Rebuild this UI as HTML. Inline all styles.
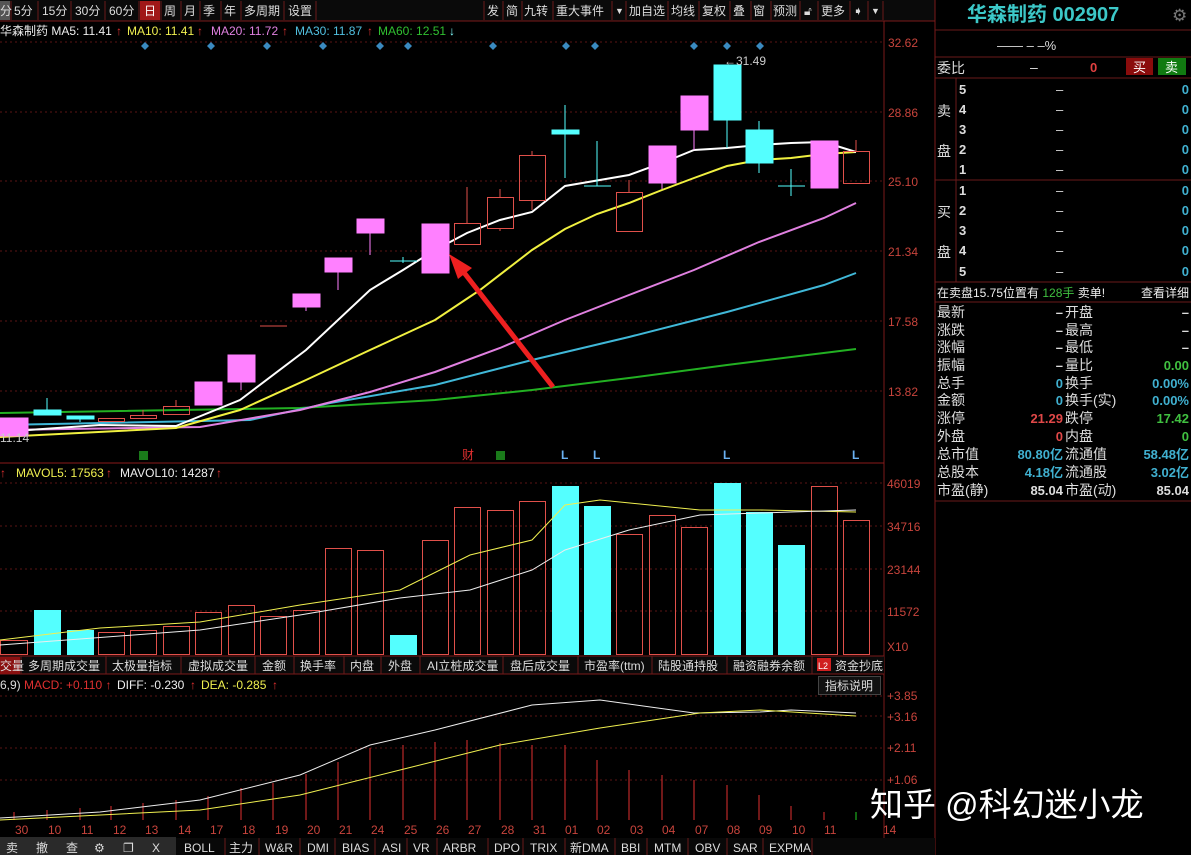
<!DOCTYPE html>
<html><head><meta charset="utf-8">
<style>
html,body{margin:0;padding:0;background:#000;width:1191px;height:855px;overflow:hidden;font-family:"Liberation Sans","Noto Sans CJK SC",sans-serif}
svg{position:absolute;left:0;top:0}
text{font-family:"Liberation Sans","Noto Sans CJK SC",sans-serif}
.ax{fill:#c8443c;font-size:12px}
.tb{fill:#ddd;font-size:12px}
.rp{fill:#ddd;font-size:14px}
</style></head><body>
<svg width="1191" height="855" viewBox="0 0 1191 855">
<rect width="1191" height="855" fill="#000"/>
<!-- top toolbar -->
<rect x="0" y="0" width="935" height="21" fill="#0a0a0a"/>
<line x1="0" y1="21" x2="935" y2="21" stroke="#7a1a1a"/>
<rect x="0" y="1" width="10" height="19" fill="#555"/>
<rect x="140" y="1" width="20" height="19" fill="#a01818"/>
<g stroke="#6a1a1a">
<line x1="11" y1="1" x2="11" y2="20"/><line x1="38" y1="1" x2="38" y2="20"/><line x1="71" y1="1" x2="71" y2="20"/><line x1="105" y1="1" x2="105" y2="20"/><line x1="139" y1="1" x2="139" y2="20"/><line x1="161" y1="1" x2="161" y2="20"/><line x1="181" y1="1" x2="181" y2="20"/><line x1="200" y1="1" x2="200" y2="20"/><line x1="221" y1="1" x2="221" y2="20"/><line x1="241" y1="1" x2="241" y2="20"/><line x1="284" y1="1" x2="284" y2="20"/><line x1="316" y1="1" x2="316" y2="20"/>
<line x1="484" y1="1" x2="484" y2="20"/><line x1="503" y1="1" x2="503" y2="20"/><line x1="522" y1="1" x2="522" y2="20"/><line x1="553" y1="1" x2="553" y2="20"/><line x1="612" y1="1" x2="612" y2="20"/><line x1="626" y1="1" x2="626" y2="20"/><line x1="668" y1="1" x2="668" y2="20"/><line x1="699" y1="1" x2="699" y2="20"/><line x1="730" y1="1" x2="730" y2="20"/><line x1="751" y1="1" x2="751" y2="20"/><line x1="771" y1="1" x2="771" y2="20"/><line x1="800" y1="1" x2="800" y2="20"/><line x1="818" y1="1" x2="818" y2="20"/><line x1="850" y1="1" x2="850" y2="20"/><line x1="868" y1="1" x2="868" y2="20"/><line x1="883" y1="1" x2="883" y2="20"/>
</g>
<g class="tb">
<text x="0" y="15">分</text><text x="14" y="15">5分</text><text x="42" y="15">15分</text><text x="75" y="15">30分</text><text x="109" y="15">60分</text><text x="144" y="15" fill="#fff">日</text><text x="164" y="15">周</text><text x="184" y="15">月</text><text x="203" y="15">季</text><text x="224" y="15">年</text><text x="244" y="15">多周期</text><text x="288" y="15">设置</text>
<text x="487" y="15">发</text><text x="506" y="15">简</text><text x="524" y="15">九转</text><text x="556" y="15">重大事件</text><text x="615" y="14" font-size="9">▼</text><text x="629" y="15">加自选</text><text x="671" y="15">均线</text><text x="702" y="15">复权</text><text x="733" y="15">叠</text><text x="753" y="15">窗</text><text x="773" y="15">预测</text><text x="804" y="15">🔓︎</text><text x="821" y="15">更多</text><text x="853" y="15">➧</text><text x="871" y="14" font-size="9">▼</text>
</g>
<!-- MA header -->
<g font-size="12">
<text x="0" y="35" fill="#eee">华森制药 MA5: 11.41</text><text x="116" y="35" fill="#e03030">↑</text>
<text x="127" y="35" fill="#f0f050">MA10: 11.41</text><text x="197" y="35" fill="#e03030">↑</text>
<text x="211" y="35" fill="#e080e0">MA20: 11.72</text><text x="282" y="35" fill="#e03030">↑</text>
<text x="295" y="35" fill="#50c0e0">MA30: 11.87</text><text x="367" y="35" fill="#e03030">↑</text>
<text x="378" y="35" fill="#30c030">MA60: 12.51</text><text x="449" y="35" fill="#80ffff">↓</text>
</g>
<!-- grid -->
<g stroke="#5a1515" stroke-dasharray="2,3">
<line x1="0" y1="42" x2="884" y2="42"/><line x1="0" y1="112" x2="884" y2="112"/><line x1="0" y1="181" x2="884" y2="181"/><line x1="0" y1="251" x2="884" y2="251"/><line x1="0" y1="321" x2="884" y2="321"/><line x1="0" y1="391" x2="884" y2="391"/>
<line x1="0" y1="483" x2="884" y2="483"/><line x1="0" y1="526" x2="884" y2="526"/><line x1="0" y1="569" x2="884" y2="569"/><line x1="0" y1="611" x2="884" y2="611"/>
<line x1="0" y1="696" x2="884" y2="696"/><line x1="0" y1="716" x2="884" y2="716"/><line x1="0" y1="748" x2="884" y2="748"/><line x1="0" y1="780" x2="884" y2="780"/>
</g>
<line x1="884" y1="21" x2="884" y2="838" stroke="#7a1a1a"/>
<line x1="935" y1="0" x2="935" y2="855" stroke="#7a1a1a"/>
<g class="ax">
<text x="888" y="47">32.62</text><text x="888" y="117">28.86</text><text x="888" y="186">25.10</text><text x="888" y="256">21.34</text><text x="888" y="326">17.58</text><text x="888" y="396">13.82</text>
<text x="887" y="488">46019</text><text x="887" y="531">34716</text><text x="887" y="574">23144</text><text x="887" y="616">11572</text><text x="887" y="651">X10</text>
<text x="887" y="700">+3.85</text><text x="887" y="721">+3.16</text><text x="887" y="752">+2.11</text><text x="887" y="784">+1.06</text>
</g>
<!-- diamonds -->
<g fill="#3a8ac0">
<path d="M145 42l4 4-4 4-4-4z"/><path d="M211 42l4 4-4 4-4-4z"/><path d="M267 42l4 4-4 4-4-4z"/><path d="M323 42l4 4-4 4-4-4z"/><path d="M380 42l4 4-4 4-4-4z"/><path d="M408 42l4 4-4 4-4-4z"/><path d="M493 42l4 4-4 4-4-4z"/><path d="M566 42l4 4-4 4-4-4z"/><path d="M595 42l4 4-4 4-4-4z"/><path d="M694 42l4 4-4 4-4-4z"/><path d="M727 42l4 4-4 4-4-4z"/><path d="M760 42l4 4-4 4-4-4z"/>
</g>
<!-- MA lines -->
<g fill="none" stroke-width="2">
<polyline stroke="#22b022" points="0,413 300,408 435,400 532,390 629,378 727,365 856,349"/>
<polyline stroke="#40b8d8" points="0,425 250,420 330,403 435,385 532,360 629,337 727,312 824,285 856,273"/>
<polyline stroke="#e080e0" points="0,430 200,427 300,410 370,392 435,372 500,348 565,320 629,295 694,270 759,242 824,218 856,203"/>
<polyline stroke="#f0f040" points="0,437 176,428 240,410 306,380 370,350 435,320 480,290 532,250 565,229 597,214 629,203 662,190 694,178 727,166 759,160 791,158 824,154 856,152"/>
<polyline stroke="#ffffff" points="0,432 100,425 176,426 240,400 306,350 370,290 403,270 435,250 467,233 500,220 532,212 565,186 629,175 662,163 694,150 727,148 759,145 791,143 824,142 856,152"/>
</g>
<!-- candles -->
<g stroke="#e0504a" fill="none">
<rect x="98.5" y="418.5" width="26" height="3"/>
<line x1="143" y1="410" x2="143" y2="415"/><rect x="130.5" y="415.5" width="26" height="3"/>
<line x1="176" y1="400" x2="176" y2="406"/><rect x="163.5" y="406.5" width="26" height="8"/>
<line x1="260" y1="326" x2="287" y2="326"/>
<line x1="467" y1="187" x2="467" y2="223"/><rect x="454.5" y="223.5" width="26" height="21"/>
<line x1="500" y1="189" x2="500" y2="197"/><line x1="500" y1="228" x2="500" y2="231"/><rect x="487.5" y="197.5" width="26" height="31"/>
<line x1="532" y1="151" x2="532" y2="155"/><line x1="532" y1="200" x2="532" y2="210"/><rect x="519.5" y="155.5" width="26" height="45"/>
<line x1="629" y1="180" x2="629" y2="192"/><rect x="616.5" y="192.5" width="26" height="39"/>
<line x1="856" y1="140" x2="856" y2="151"/><rect x="843.5" y="151.5" width="26" height="32"/>
</g>
<g fill="#ff80ff" stroke="#ff80ff">
<rect x="0" y="418" width="28" height="18"/>
<rect x="195" y="382" width="27" height="23"/>
<line x1="241" y1="382" x2="241" y2="390"/><rect x="228" y="355" width="27" height="27"/>
<line x1="306" y1="307" x2="306" y2="311"/><rect x="293" y="294" width="27" height="13"/>
<line x1="338" y1="272" x2="338" y2="290"/><rect x="325" y="258" width="27" height="14"/>
<line x1="370" y1="233" x2="370" y2="255"/><rect x="357" y="219" width="27" height="14"/>
<rect x="422" y="224" width="27" height="49"/>
<line x1="662" y1="183" x2="662" y2="189"/><rect x="649" y="146" width="27" height="37"/>
<line x1="694" y1="130" x2="694" y2="150"/><rect x="681" y="96" width="27" height="34"/>
<rect x="811" y="141" width="27" height="47"/>
</g>
<g fill="#54ffff" stroke="#54ffff">
<line x1="47" y1="398" x2="47" y2="415"/><rect x="34" y="410" width="27" height="5"/>
<line x1="80" y1="416" x2="80" y2="422"/><rect x="67" y="416" width="27" height="3"/>
<line x1="403" y1="257" x2="403" y2="263"/><line x1="390" y1="261" x2="417" y2="261"/>
<line x1="565" y1="105" x2="565" y2="178"/><rect x="552" y="130" width="27" height="4"/>
<line x1="597" y1="141" x2="597" y2="186"/><line x1="584" y1="186" x2="611" y2="186"/>
<line x1="727" y1="120" x2="727" y2="148"/><rect x="714" y="65" width="27" height="55"/>
<line x1="759" y1="121" x2="759" y2="173"/><rect x="746" y="130" width="27" height="33"/>
<line x1="791" y1="169" x2="791" y2="196"/><line x1="778" y1="186" x2="805" y2="186"/>
</g>
<text x="724" y="65" fill="#ccc" font-size="12">←31.49</text>
<text x="0" y="442" fill="#ccc" font-size="12">11.14</text>
<!-- arrow -->
<line x1="553" y1="387" x2="462" y2="270" stroke="#ee2020" stroke-width="5"/>
<path d="M449 254 L472 268 L458 279 Z" fill="#ee2020"/>
<!-- markers -->
<rect x="139" y="451" width="9" height="9" fill="#1a7a1a"/><rect x="496" y="451" width="9" height="9" fill="#1a7a1a"/>
<text x="462" y="459" fill="#e03030" font-size="12">财</text>
<g fill="#6ab0f0" font-size="12" font-weight="bold"><text x="561" y="459">L</text><text x="593" y="459">L</text><text x="723" y="459">L</text><text x="852" y="459">L</text></g>
<line x1="0" y1="463" x2="884" y2="463" stroke="#8a1a1a"/>
<!-- volume -->
<g font-size="12"><text x="0" y="477" fill="#e03030">↑</text><text x="16" y="477" fill="#f0f050">MAVOL5: 17563</text><text x="106" y="477" fill="#e03030">↑</text><text x="120" y="477" fill="#eee">MAVOL10: 14287</text><text x="216" y="477" fill="#e03030">↑</text></g>
<g stroke="#e0504a" fill="none">
<rect x="0.5" y="640.5" width="27" height="14"/><rect x="98.5" y="632.5" width="26" height="22"/><rect x="130.5" y="630.5" width="26" height="24"/><rect x="163.5" y="626.5" width="26" height="28"/><rect x="195.5" y="612.5" width="26" height="42"/><rect x="228.5" y="605.5" width="26" height="49"/><rect x="260.5" y="616.5" width="26" height="38"/><rect x="293.5" y="610.5" width="26" height="44"/><rect x="325.5" y="548.5" width="26" height="106"/><rect x="357.5" y="550.5" width="26" height="104"/><rect x="422.5" y="540.5" width="26" height="114"/><rect x="454.5" y="507.5" width="26" height="147"/><rect x="487.5" y="510.5" width="26" height="144"/><rect x="519.5" y="501.5" width="26" height="153"/><rect x="616.5" y="534.5" width="26" height="120"/><rect x="649.5" y="515.5" width="26" height="139"/><rect x="681.5" y="527.5" width="26" height="127"/><rect x="811.5" y="486.5" width="26" height="168"/><rect x="843.5" y="520.5" width="26" height="134"/>
</g>
<g fill="#54ffff">
<rect x="34" y="610" width="27" height="45"/><rect x="67" y="630" width="27" height="25"/><rect x="390" y="635" width="27" height="20"/><rect x="552" y="486" width="27" height="169"/><rect x="584" y="506" width="27" height="149"/><rect x="714" y="483" width="27" height="172"/><rect x="746" y="512" width="27" height="143"/><rect x="778" y="545" width="27" height="110"/>
</g>
<polyline fill="none" stroke="#f0f050" points="0,640 100,628 200,622 300,605 400,590 470,555 532,540 565,505 600,500 700,510 760,510 856,512"/>
<polyline fill="none" stroke="#eee" points="0,645 200,630 300,615 400,598 470,590 532,570 565,550 629,530 700,515 791,512 856,510"/>
<!-- tabs -->
<rect x="0" y="656" width="884" height="18" fill="#0a0a0a"/>
<line x1="0" y1="656" x2="884" y2="656" stroke="#7a1a1a"/><line x1="0" y1="674" x2="884" y2="674" stroke="#7a1a1a"/>
<rect x="0" y="657" width="20" height="17" fill="#8a1010"/>
<rect x="817" y="658" width="14" height="13" fill="#d02020"/>
<g stroke="#6a1a1a"><line x1="21" y1="656" x2="21" y2="674"/><line x1="106" y1="656" x2="106" y2="674"/><line x1="181" y1="656" x2="181" y2="674"/><line x1="255" y1="656" x2="255" y2="674"/><line x1="294" y1="656" x2="294" y2="674"/><line x1="344" y1="656" x2="344" y2="674"/><line x1="381" y1="656" x2="381" y2="674"/><line x1="420" y1="656" x2="420" y2="674"/><line x1="503" y1="656" x2="503" y2="674"/><line x1="578" y1="656" x2="578" y2="674"/><line x1="652" y1="656" x2="652" y2="674"/><line x1="727" y1="656" x2="727" y2="674"/><line x1="812" y1="656" x2="812" y2="674"/></g>
<g class="tb"><text x="0" y="670">交量</text><text x="28" y="670">多周期成交量</text><text x="112" y="670">太极量指标</text><text x="188" y="670">虚拟成交量</text><text x="262" y="670">金额</text><text x="300" y="670">换手率</text><text x="350" y="670">内盘</text><text x="388" y="670">外盘</text><text x="427" y="670">AI立桩成交量</text><text x="510" y="670">盘后成交量</text><text x="584" y="670">市盈率(ttm)</text><text x="658" y="670">陆股通持股</text><text x="733" y="670">融资融券余额</text><text x="818" y="669" font-size="9" fill="#fff">L2</text><text x="835" y="670">资金抄底</text></g>
<!-- MACD header -->
<g font-size="12"><text x="0" y="689" fill="#ddd">6,9)</text><text x="24" y="689" fill="#e03030">MACD: +0.110 ↑</text><text x="117" y="689" fill="#eee">DIFF: -0.230</text><text x="190" y="689" fill="#e03030">↑</text><text x="201" y="689" fill="#f0f050">DEA: -0.285</text><text x="272" y="689" fill="#e03030">↑</text></g>
<rect x="818.5" y="676.5" width="62" height="18" fill="#111" stroke="#444"/>
<text x="825" y="690" class="tb">指标说明</text>
<!-- MACD bars -->
<g stroke="#e03030">
<line x1="14" y1="820" x2="14" y2="812"/><line x1="47" y1="820" x2="47" y2="810"/><line x1="80" y1="820" x2="80" y2="808"/><line x1="111" y1="820" x2="111" y2="806"/><line x1="143" y1="820" x2="143" y2="803"/><line x1="176" y1="820" x2="176" y2="800"/><line x1="208" y1="820" x2="208" y2="796"/><line x1="241" y1="820" x2="241" y2="788"/><line x1="273" y1="820" x2="273" y2="783"/><line x1="306" y1="820" x2="306" y2="774"/><line x1="338" y1="820" x2="338" y2="762"/><line x1="370" y1="820" x2="370" y2="748"/><line x1="403" y1="820" x2="403" y2="745"/><line x1="435" y1="820" x2="435" y2="742"/><line x1="467" y1="820" x2="467" y2="740"/><line x1="500" y1="820" x2="500" y2="743"/><line x1="532" y1="820" x2="532" y2="745"/><line x1="565" y1="820" x2="565" y2="745"/><line x1="597" y1="820" x2="597" y2="760"/><line x1="629" y1="820" x2="629" y2="770"/><line x1="662" y1="820" x2="662" y2="775"/><line x1="694" y1="820" x2="694" y2="780"/><line x1="727" y1="820" x2="727" y2="785"/><line x1="759" y1="820" x2="759" y2="795"/><line x1="791" y1="820" x2="791" y2="806"/><line x1="824" y1="820" x2="824" y2="812"/>
</g>
<line x1="856" y1="820" x2="856" y2="812" stroke="#2c2"/>
<polyline fill="none" stroke="#eee" points="0,818 100,812 200,800 300,775 370,745 435,730 532,705 600,700 694,713 760,712 791,710 856,713"/>
<polyline fill="none" stroke="#f0f050" points="0,820 200,810 300,795 400,770 500,745 600,728 700,713 760,710 856,716"/>
<!-- dates -->
<g class="ax"><text x="15" y="834">30</text><text x="48" y="834">10</text><text x="81" y="834">11</text><text x="113" y="834">12</text><text x="145" y="834">13</text><text x="178" y="834">14</text><text x="210" y="834">17</text><text x="242" y="834">18</text><text x="275" y="834">19</text><text x="307" y="834">20</text><text x="339" y="834">21</text><text x="371" y="834">24</text><text x="404" y="834">25</text><text x="436" y="834">26</text><text x="468" y="834">27</text><text x="501" y="834">28</text><text x="533" y="834">31</text><text x="565" y="834">01</text><text x="597" y="834">02</text><text x="630" y="834">03</text><text x="662" y="834">04</text><text x="695" y="834">07</text><text x="727" y="834">08</text><text x="759" y="834">09</text><text x="792" y="834">10</text><text x="824" y="834">11</text><text x="883" y="834">14</text></g>
<!-- bottom toolbar -->
<rect x="0" y="837" width="176" height="18" fill="#2a2a2a"/>
<rect x="176" y="838" width="759" height="17" fill="#080808"/>
<g class="tb" fill="#ddd"><text x="6" y="852">卖</text><text x="36" y="852">撤</text><text x="66" y="852">查</text><text x="94" y="852">⚙</text><text x="123" y="852">❐</text><text x="152" y="852">X</text></g>
<g stroke="#6a1a1a"><line x1="225" y1="838" x2="225" y2="855"/><line x1="259" y1="838" x2="259" y2="855"/><line x1="300" y1="838" x2="300" y2="855"/><line x1="335" y1="838" x2="335" y2="855"/><line x1="375" y1="838" x2="375" y2="855"/><line x1="407" y1="838" x2="407" y2="855"/><line x1="437" y1="838" x2="437" y2="855"/><line x1="488" y1="838" x2="488" y2="855"/><line x1="523" y1="838" x2="523" y2="855"/><line x1="565" y1="838" x2="565" y2="855"/><line x1="615" y1="838" x2="615" y2="855"/><line x1="647" y1="838" x2="647" y2="855"/><line x1="688" y1="838" x2="688" y2="855"/><line x1="727" y1="838" x2="727" y2="855"/><line x1="763" y1="838" x2="763" y2="855"/><line x1="812" y1="838" x2="812" y2="855"/></g>
<g class="tb"><text x="184" y="852">BOLL</text><text x="229" y="852">主力</text><text x="265" y="852">W&amp;R</text><text x="307" y="852">DMI</text><text x="342" y="852">BIAS</text><text x="382" y="852">ASI</text><text x="413" y="852">VR</text><text x="443" y="852">ARBR</text><text x="494" y="852">DPO</text><text x="530" y="852">TRIX</text><text x="570" y="852">新DMA</text><text x="621" y="852">BBI</text><text x="654" y="852">MTM</text><text x="695" y="852">OBV</text><text x="733" y="852">SAR</text><text x="769" y="852">EXPMA</text></g>
<!-- watermark -->
<text x="870" y="816" fill="#fff" font-size="33" font-family="'Noto Sans CJK SC',sans-serif">知乎 @科幻迷小龙</text>
<!-- right panel -->
<text x="967" y="21" fill="#3cc8c8" font-size="20" font-weight="bold" font-family="'Liberation Serif','Noto Serif CJK SC',serif">华森制药 002907</text>
<text x="1172" y="21" fill="#777" font-size="17">⚙</text>
<line x1="935" y1="30" x2="1191" y2="30" stroke="#6a1a1a"/>
<text x="997" y="50" fill="#ddd" font-size="13">——  –  –%</text>
<line x1="935" y1="57" x2="1191" y2="57" stroke="#6a1a1a"/>
<text x="937" y="73" class="rp" font-size="15">委比</text><text x="1030" y="72" class="rp">–</text><text x="1090" y="72" fill="#e04040" font-size="13" font-weight="bold">0</text>
<rect x="1126" y="58" width="27" height="17" fill="#8a0c0c"/><rect x="1158" y="58" width="28" height="17" fill="#117a11"/>
<text x="1133" y="72" fill="#fff" font-size="13">买</text><text x="1165" y="72" fill="#fff" font-size="13">卖</text>
<line x1="935" y1="78" x2="1191" y2="78" stroke="#6a1a1a"/>
<line x1="956" y1="78" x2="956" y2="282" stroke="#6a1a1a"/>
<line x1="935" y1="180" x2="1191" y2="180" stroke="#6a1a1a"/>
<line x1="935" y1="282" x2="1191" y2="282" stroke="#6a1a1a"/>
<g class="rp" font-size="15"><text x="937" y="116">卖</text><text x="937" y="156">盘</text><text x="937" y="217">买</text><text x="937" y="257">盘</text></g>
<g fill="#ddd" font-size="13" font-weight="bold"><text x="959" y="94">5</text><text x="959" y="114">4</text><text x="959" y="134">3</text><text x="959" y="154">2</text><text x="959" y="174">1</text><text x="959" y="195">1</text><text x="959" y="215">2</text><text x="959" y="235">3</text><text x="959" y="255">4</text><text x="959" y="276">5</text></g>
<g fill="#ddd" font-size="13"><text x="1056" y="94">–</text><text x="1056" y="114">–</text><text x="1056" y="134">–</text><text x="1056" y="154">–</text><text x="1056" y="174">–</text><text x="1056" y="195">–</text><text x="1056" y="215">–</text><text x="1056" y="235">–</text><text x="1056" y="255">–</text><text x="1056" y="276">–</text></g>
<g fill="#40b0d0" font-size="13" font-weight="bold" text-anchor="end"><text x="1189" y="94">0</text><text x="1189" y="114">0</text><text x="1189" y="134">0</text><text x="1189" y="154">0</text><text x="1189" y="174">0</text><text x="1189" y="195">0</text><text x="1189" y="215">0</text><text x="1189" y="235">0</text><text x="1189" y="255">0</text><text x="1189" y="276">0</text></g>
<text x="937" y="297" fill="#eee" font-size="12">在卖盘15.75位置有 <tspan fill="#40c040">128手</tspan> 卖单!</text>
<text x="1141" y="297" fill="#eee" font-size="12">查看详细</text>
<line x1="935" y1="302" x2="1191" y2="302" stroke="#6a1a1a"/>
<g class="rp"><text x="937" y="317">最新</text><text x="937" y="335">涨跌</text><text x="937" y="352">涨幅</text><text x="937" y="370">振幅</text><text x="937" y="388">总手</text><text x="937" y="405">金额</text><text x="937" y="423">涨停</text><text x="937" y="441">外盘</text><text x="937" y="459">总市值</text><text x="937" y="477">总股本</text><text x="937" y="495">市盈(静)</text>
<text x="1065" y="317">开盘</text><text x="1065" y="335">最高</text><text x="1065" y="352">最低</text><text x="1065" y="370">量比</text><text x="1065" y="388">换手</text><text x="1065" y="405">换手(实)</text><text x="1065" y="423">跌停</text><text x="1065" y="441">内盘</text><text x="1065" y="459">流通值</text><text x="1065" y="477">流通股</text><text x="1065" y="495">市盈(动)</text></g>
<g font-size="13" font-weight="bold" text-anchor="end">
<text x="1063" y="317" fill="#ddd">–</text><text x="1063" y="335" fill="#ddd">–</text><text x="1063" y="352" fill="#ddd">–</text><text x="1063" y="370" fill="#ddd">–</text><text x="1063" y="388" fill="#40b0d0">0</text><text x="1063" y="405" fill="#40b0d0">0</text><text x="1063" y="423" fill="#e04848">21.29</text><text x="1063" y="441" fill="#e04848">0</text><text x="1063" y="459" fill="#40b0d0">80.80亿</text><text x="1063" y="477" fill="#40b0d0">4.18亿</text><text x="1063" y="495" fill="#ddd">85.04</text>
<text x="1189" y="317" fill="#ddd">–</text><text x="1189" y="335" fill="#ddd">–</text><text x="1189" y="352" fill="#ddd">–</text><text x="1189" y="370" fill="#40c040">0.00</text><text x="1189" y="388" fill="#40b0d0">0.00%</text><text x="1189" y="405" fill="#40b0d0">0.00%</text><text x="1189" y="423" fill="#40c040">17.42</text><text x="1189" y="441" fill="#40c040">0</text><text x="1189" y="459" fill="#40b0d0">58.48亿</text><text x="1189" y="477" fill="#40b0d0">3.02亿</text><text x="1189" y="495" fill="#ddd">85.04</text>
</g>
<line x1="935" y1="501" x2="1191" y2="501" stroke="#6a1a1a"/>
</svg>
</body></html>
